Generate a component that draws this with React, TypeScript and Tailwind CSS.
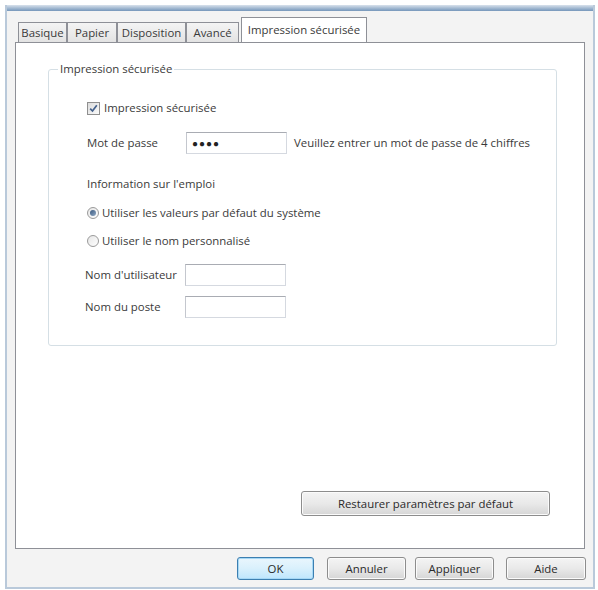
import React from "react";

const font = { fontFamily: '"Open Sans", "Noto Sans", sans-serif' };

function Tab({ label, w, active }: { label: string; w: number; active?: boolean }) {
  if (active) {
    return (
      <div
        className="-mb-px flex h-[26px] items-start justify-center border border-b-0 border-[#8e9097] bg-white pt-[3px] text-[11.4px] text-[#3a3a3a]"
        style={{ width: w }}
      >
        {label}
      </div>
    );
  }
  return (
    <div
      className="flex h-[20px] items-center justify-center border border-b-0 border-[#8e9097] bg-gradient-to-b from-[#f4f4f4] to-[#e3e3e3] text-[11.4px] text-[#3a3a3a]"
      style={{ width: w }}
    >
      {label}
    </div>
  );
}

function WinButton({ label, w, tall, focused }: { label: string; w: number; tall?: boolean; focused?: boolean }) {
  return (
    <div
      className={`flex items-center justify-center rounded-[3px] border text-[11.4px] text-[#2a2a2a] ${
        tall ? "h-[25px]" : "h-[23px]"
      } ${
        focused
          ? "border-[#3c7fb1] bg-gradient-to-b from-[#eaf6fd] via-[#d9f0fc] to-[#bee6fd] shadow-[inset_0_0_0_1px_#a6d8f5]"
          : "border-[#8d8d8d] bg-gradient-to-b from-[#f4f4f4] via-[#e9e9e9] to-[#d6d6d6] shadow-[inset_0_0_0_1px_#fbfbfb]"
      }`}
      style={{ width: w }}
    >
      {label}
    </div>
  );
}

function TextBox({ children }: { children?: React.ReactNode }) {
  return (
    <div className="flex h-[22px] w-[101px] items-center border border-[#d5d9e0] border-t-[#a9acb3] border-l-[#c4c7ce] bg-white px-[5px]">
      {children}
    </div>
  );
}

function Radio({ checked }: { checked?: boolean }) {
  return (
    <span className="flex h-[12px] w-[12px] items-center justify-center rounded-full border border-[#9a9a9a] bg-gradient-to-br from-[#e6e6e6] to-[#ffffff]">
      {checked ? (
        <span className="h-[6px] w-[6px] rounded-full bg-gradient-to-br from-[#3b5a80] to-[#8fa8c4]" />
      ) : null}
    </span>
  );
}

export default function App() {
  return (
    <div className="h-[590px] w-[598px] bg-white pt-[5px] text-[#3a3a3a]" style={font}>
      <div className="ml-[5px] flex h-[584px] w-[590px] flex-col border-x-2 border-b-2 border-[#b9c9da] bg-[#f3f3f3]">
        <div className="h-[6px] bg-gradient-to-b from-[#d9e2ec] to-[#7596ba]" />

        {/* tabs */}
        <div className="ml-[11px] mt-[6px] flex items-end">
          <Tab label="Basique" w={49} />
          <Tab label="Papier" w={50} />
          <Tab label="Disposition" w={69} />
          <Tab label="Avancé" w={53} />
          <div className="w-[2px]" />
          <Tab label="Impression sécurisée" w={126} active />
        </div>

        {/* panel */}
        <div className="ml-[8px] flex h-[507px] w-[570px] flex-col border border-[#8e9097] bg-white">
          <div className="relative ml-[32px] mt-[26px] h-[277px] w-[509px] rounded-[3px] border border-[#d5dfe5]">
            <span className="absolute left-[9px] top-[-9px] bg-white px-[2px] text-[11.4px] leading-[16px]">
              Impression sécurisée
            </span>

            <div className="flex flex-col pl-[38px] pt-[27px] text-[11.4px]">
              <div className="flex h-[22px] items-center gap-[4px]">
                <span className="flex h-[13px] w-[13px] items-center justify-center border border-[#8f8f8f] bg-gradient-to-br from-[#dcdcdc] to-[#fafafa]">
                  <svg width="9" height="9" viewBox="0 0 9 9">
                    <path d="M1.2 4.6 L3.5 7 L7.8 1.2" fill="none" stroke="#44618c" strokeWidth="1.7" />
                  </svg>
                </span>
                <span>Impression sécurisée</span>
              </div>

              <div className="mt-[13px] flex h-[22px] items-center">
                <span className="w-[99px]">Mot de passe</span>
                <TextBox>
                  <span className="text-[10px] font-bold tracking-[1px] text-[#222]">●●●●</span>
                </TextBox>
                <span className="ml-[7px]">Veuillez entrer un mot de passe de 4 chiffres</span>
              </div>

              <div className="mt-[20px] flex h-[20px] items-center">Information sur l'emploi</div>

              <div className="mt-[9px] flex h-[20px] items-center gap-[3px]">
                <Radio checked />
                <span>Utiliser les valeurs par défaut du système</span>
              </div>

              <div className="mt-[8px] flex h-[20px] items-center gap-[3px]">
                <Radio />
                <span>Utiliser le nom personnalisé</span>
              </div>

              <div className="-ml-[2px] mt-[13px] flex h-[22px] items-center">
                <span className="w-[100px]">Nom d'utilisateur</span>
                <TextBox />
              </div>

              <div className="-ml-[2px] mt-[10px] flex h-[22px] items-center">
                <span className="w-[100px]">Nom du poste</span>
                <TextBox />
              </div>
            </div>
          </div>

          <div className="mt-[145px] flex justify-end pr-[34px]">
            <WinButton label="Restaurer paramètres par défaut" w={249} tall />
          </div>
        </div>

        {/* dialog buttons */}
        <div className="ml-[230px] mt-[8px] flex">
          <WinButton label="OK" w={77} focused />
          <div className="w-[13px]" />
          <WinButton label="Annuler" w={79} />
          <div className="w-[9px]" />
          <WinButton label="Appliquer" w={79} />
          <div className="w-[12px]" />
          <WinButton label="Aide" w={80} />
        </div>
      </div>
    </div>
  );
}
